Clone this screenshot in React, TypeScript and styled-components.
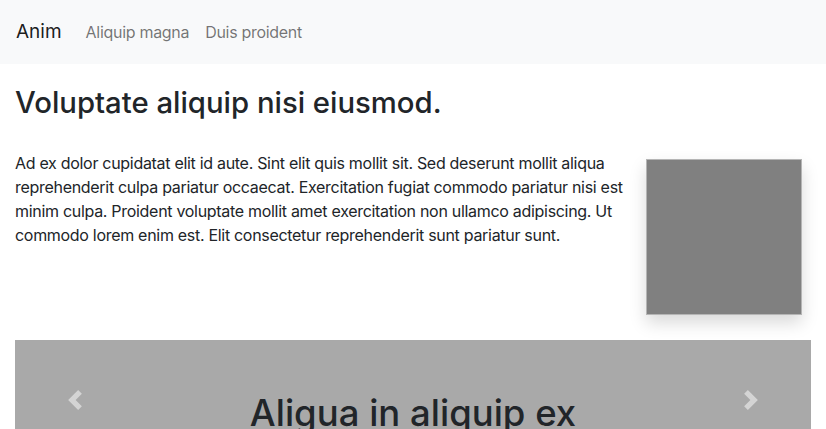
import React from "react";
import styled, { createGlobalStyle } from "styled-components";

const Global = createGlobalStyle`
  html, body { margin: 0; padding: 0; background: #fff; }
  body {
    font-family: Inter, "Noto Sans", "Liberation Sans", sans-serif;
    font-size: 16px;
    line-height: 1.5;
    color: #212529;
  }
  * { box-sizing: border-box; }
`;

const Navbar = styled.nav`
  height: 64px;
  background: #f8f9fa;
  display: flex;
  align-items: center;
  padding: 0 16px;
`;

const Brand = styled.a`
  font-size: 19px;
  color: rgba(0, 0, 0, 0.9);
  text-decoration: none;
  margin-right: 16px;
`;

const NavLink = styled.a`
  font-size: 16px;
  letter-spacing: -0.3px;
  color: rgba(0, 0, 0, 0.55);
  text-decoration: none;
  padding: 0 8px;
`;

const Main = styled.main`
  padding: 0 15px;
`;

const Title = styled.h1`
  font-size: 29.3px;
  font-weight: 500;
  line-height: 1.2;
  margin: 21px 0 0 0;
`;

const Row = styled.div`
  display: flex;
  align-items: flex-start;
  margin-top: 31px;
`;

const Text = styled.p`
  flex: 0 0 628px;
  margin: 0;
  letter-spacing: -0.3px;
`;

const ImageCol = styled.div`
  flex: 1;
  display: flex;
  justify-content: flex-end;
  padding-right: 9px;
  padding-top: 8px;
`;

const Photo = styled.div`
  width: 156px;
  height: 156px;
  background: #808080;
  border: 1px solid #b5b5b5;
  box-shadow: 0 8px 16px rgba(0, 0, 0, 0.15);
`;

const Carousel = styled.section`
  position: relative;
  margin-top: 25px;
  height: 120px;
  background: #a9a9a9;
  display: flex;
  align-items: flex-start;
  justify-content: center;
  padding-top: 52px;
`;

const SlideTitle = styled.h2`
  margin: 0;
  font-size: 36.5px;
  font-weight: 500;
  line-height: 1.2;
  color: #212529;
`;

const Control = styled.button<{ $side: "left" | "right" }>`
  position: absolute;
  top: 0;
  bottom: 0;
  ${(p) => (p.$side === "left" ? "left: 0;" : "right: 0;")}
  width: 15%;
  border: 0;
  background: transparent;
  display: flex;
  align-items: center;
  justify-content: center;
  opacity: 0.5;
  padding: 0;
`;

const Chevron = ({ dir }: { dir: "left" | "right" }) => (
  <svg width="20" height="20" viewBox="0 0 8 8" fill="#fff">
    {dir === "left" ? (
      <path d="M5.25 0l-4 4 4 4 1.5-1.5L4.25 4l2.5-2.5L5.25 0z" />
    ) : (
      <path d="M2.75 0l-1.5 1.5L3.75 4l-2.5 2.5L2.75 8l4-4-4-4z" />
    )}
  </svg>
);

export default function App() {
  return (
    <>
      <Global />
      <Navbar>
        <Brand href="#">Anim</Brand>
        <NavLink href="#">Aliquip magna</NavLink>
        <NavLink href="#">Duis proident</NavLink>
      </Navbar>
      <Main>
        <Title>Voluptate aliquip nisi eiusmod.</Title>
        <Row>
          <Text>
            Ad ex dolor cupidatat elit id aute. Sint elit quis mollit sit. Sed deserunt mollit
            aliqua reprehenderit culpa pariatur occaecat. Exercitation fugiat commodo pariatur
            nisi est minim culpa. Proident voluptate mollit amet exercitation non ullamco
            adipiscing. Ut commodo lorem enim est. Elit consectetur reprehenderit sunt pariatur
            sunt.
          </Text>
          <ImageCol>
            <Photo />
          </ImageCol>
        </Row>
        <Carousel>
          <Control $side="left" aria-label="Previous">
            <Chevron dir="left" />
          </Control>
          <SlideTitle>Aligua in aliquip ex</SlideTitle>
          <Control $side="right" aria-label="Next">
            <Chevron dir="right" />
          </Control>
        </Carousel>
      </Main>
    </>
  );
}
